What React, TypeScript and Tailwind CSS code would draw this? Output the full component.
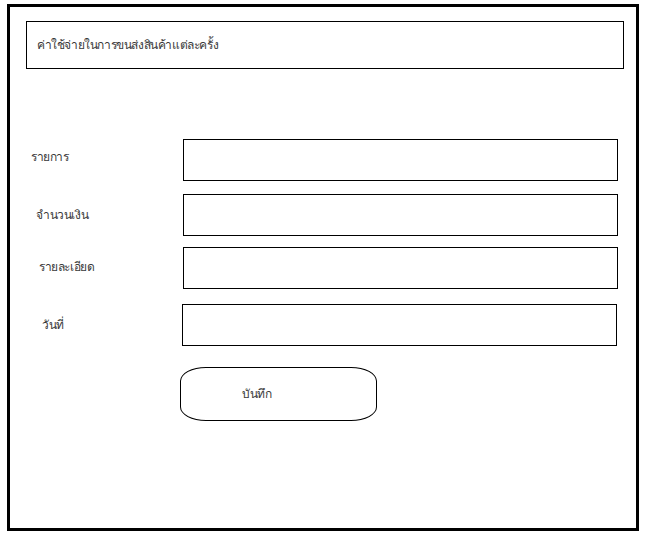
export default function App() {
  const rows = [
    { label: "รายการ", pad: "pl-[21px]", mt: "mt-[70px]", lt: "-mt-[6px]", boxX: "ml-0" },
    { label: "จำนวนเงิน", pad: "pl-[26px]", mt: "mt-[13px]", lt: "mt-0", boxX: "ml-0" },
    { label: "รายละเอียด", pad: "pl-[29px]", mt: "mt-[11px]", lt: "-mt-[2px]", boxX: "ml-0" },
    { label: "วันที่", pad: "pl-[32px]", mt: "mt-[15px]", lt: "mt-0", boxX: "-ml-px" },
  ];

  return (
    <div className="h-[535px] w-[645px] bg-white pl-[7px] pt-[4px] font-['Tahoma','Liberation_Sans',sans-serif] text-[12px] tracking-[-0.4px] text-[#3a3a3a]">
      <div className="flex h-[527px] w-[632px] flex-col border-[3px] border-black">
        <div className="ml-[16px] mt-[14px] flex h-[48px] w-[598px] items-center border border-black pl-[10px]">
          ค่าใช้จ่ายในการขนส่งสินค้าแต่ละครั้ง
        </div>

        {rows.map((row) => (
          <div key={row.label} className={`flex items-center ${row.mt}`}>
            <div className={`w-[173px] ${row.pad} ${row.lt}`}>{row.label}</div>
            <div className={`h-[42px] w-[435px] border border-black ${row.boxX}`} />
          </div>
        ))}

        <div className="ml-[170px] mt-[21px] flex h-[54px] w-[197px] items-center rounded-[26px/14px] border border-black pl-[61px]">
          บันทึก
        </div>
      </div>
    </div>
  );
}
